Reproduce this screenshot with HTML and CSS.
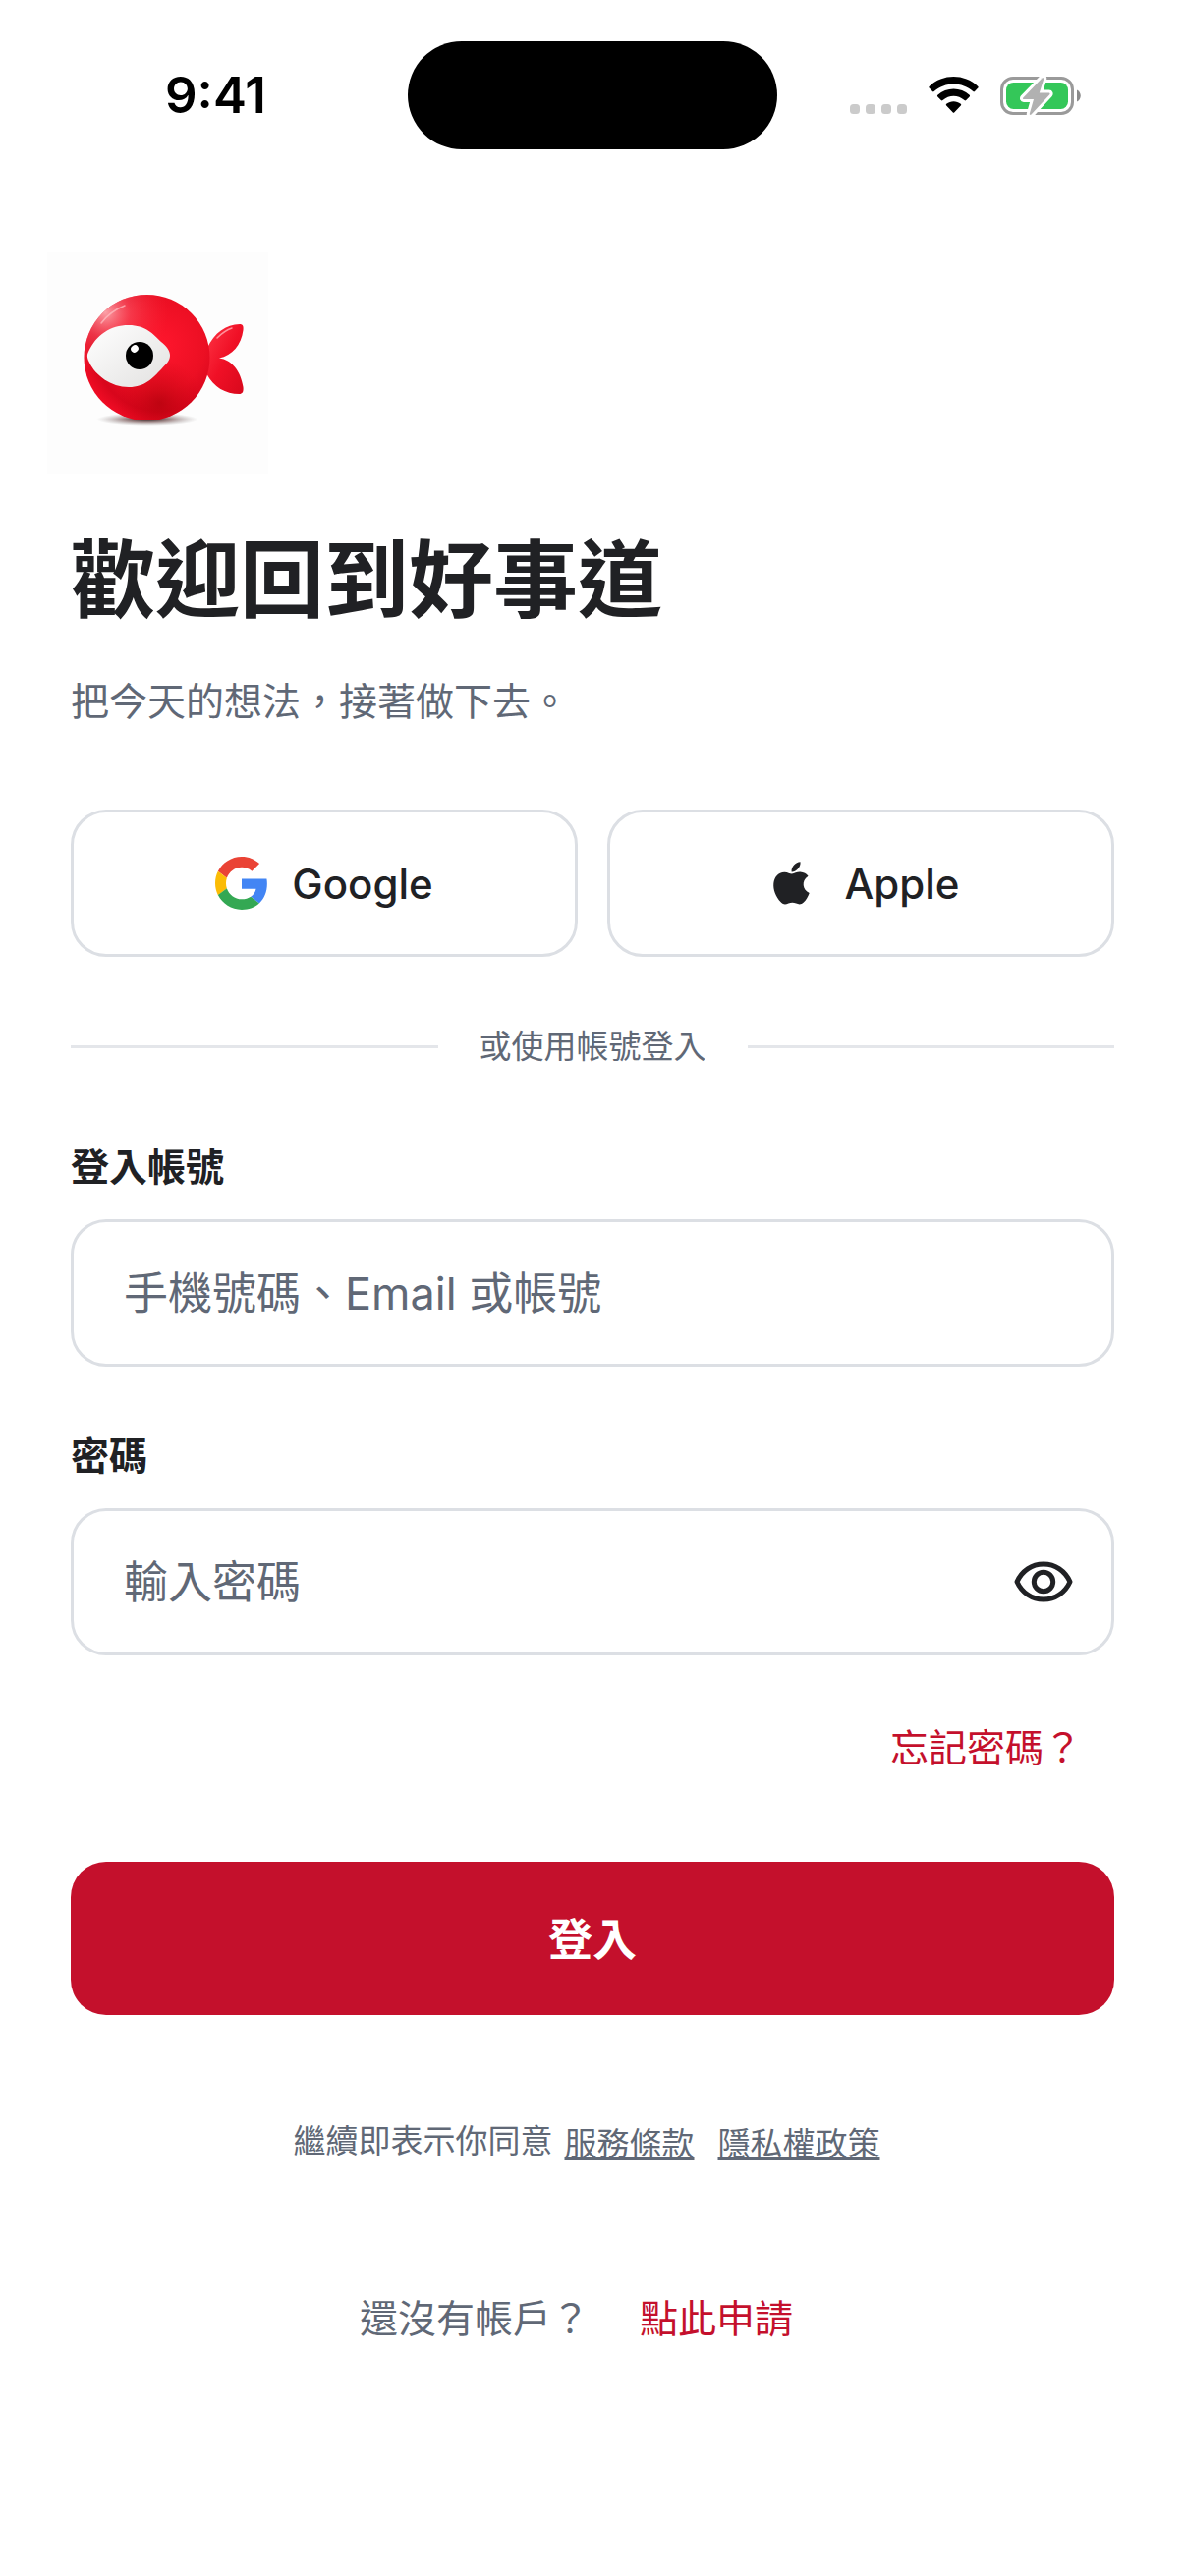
FILE: index.html
```html
<!DOCTYPE html>
<html lang="zh-Hant">
<head>
    <meta charset="UTF-8">
    <meta name="viewport" content="width=device-width, initial-scale=1.0">
    <title>登入</title>
    <link rel="stylesheet" href="styles.css">
</head>
<body>
    <header class="status-bar">
        <span class="time">9:41</span>
        <span class="island"></span>
        <div class="status-icons">
            <svg class="signal" viewBox="0 0 58 10" fill="#cbcbcb">
                <rect x="0" y="0" width="10" height="10" rx="3.5"/>
                <rect x="16" y="0" width="10" height="10" rx="3.5"/>
                <rect x="32" y="0" width="10" height="10" rx="3.5"/>
                <rect x="48" y="0" width="10" height="10" rx="3.5"/>
            </svg>
            <svg class="wifi" viewBox="0 0 51 38">
                <path d="M0.7 11.6a1.2 1.2 0 0 1 0-1.7C14.5-3.3 36.5-3.3 50.3 9.9a1.2 1.2 0 0 1 0 1.7L47 15a1.2 1.2 0 0 1-1.7 0C34 4.9 17 4.9 5.7 15a1.2 1.2 0 0 1-1.7 0z"/>
                <path d="M9.3 20.5a1.2 1.2 0 0 1 0-1.7c9-8.3 23.4-8.3 32.4 0a1.2 1.2 0 0 1 0 1.7l-3.5 3.6a1.2 1.2 0 0 1-1.7 0c-6.5-5.8-15.5-5.8-22 0a1.2 1.2 0 0 1-1.7 0z"/>
                <path d="M18.2 29.6a1.2 1.2 0 0 1 0-1.8c4.3-3.5 10.3-3.5 14.6 0a1.2 1.2 0 0 1 0 1.8l-6.4 6.7a1.2 1.2 0 0 1-1.8 0z"/>
            </svg>
            <svg class="battery" viewBox="0 0 82 41">
                <rect x="1.5" y="2.5" width="72" height="36" rx="11.5" fill="none" stroke="#9a9a9a" stroke-width="3"/>
                <rect x="6" y="7" width="63" height="27" rx="7.5" fill="#34c759"/>
                <path d="M78 14.5c5 2 5 10 0 12z" fill="#8a8a8a"/>
                <path d="M42.5 2.5 23.3 22.4c-.6.8-.3 1.6.6 1.6H34l-4.2 14.8c-.2 1 1 1.6 1.7.8l18.8-20.400c.6-.8.3-1.6-.6-1.6H39.8l4.400-14.2c.3-1.1-.9-1.7-1.7-.9z" fill="#b1b1b1" stroke="#fff" stroke-width="6" stroke-linejoin="round" paint-order="stroke"/>
            </svg>
        </div>
    </header>

    <main class="login">
        <svg class="logo" viewBox="0 0 225 225" role="img" aria-label="好事道">
            <defs>
                <radialGradient id="body" cx="0.6" cy="0.4" r="0.66">
                    <stop offset="0" stop-color="#ff162d"/>
                    <stop offset="0.55" stop-color="#ec0f23"/>
                    <stop offset="0.8" stop-color="#d8061c"/>
                    <stop offset="1" stop-color="#f50d26"/>
                </radialGradient>
                <radialGradient id="dark" cx="0.6" cy="0.86" r="0.35">
                    <stop offset="0" stop-color="#a80008" stop-opacity="0.6"/>
                    <stop offset="1" stop-color="#c80010" stop-opacity="0"/>
                </radialGradient>
                <radialGradient id="shine" cx="0.17" cy="0.14" r="0.5">
                    <stop offset="0" stop-color="#ffb3b8" stop-opacity="0.9"/>
                    <stop offset="0.4" stop-color="#ff6070" stop-opacity="0.5"/>
                    <stop offset="1" stop-color="#ff3040" stop-opacity="0"/>
                </radialGradient>
                <radialGradient id="shadow">
                    <stop offset="0" stop-color="#100" stop-opacity="0.9"/>
                    <stop offset="0.5" stop-color="#300" stop-opacity="0.4"/>
                    <stop offset="1" stop-color="#666" stop-opacity="0"/>
                </radialGradient>
                <linearGradient id="fin" x1="0" y1="0" x2="1" y2="1">
                    <stop offset="0" stop-color="#ff3545"/>
                    <stop offset="0.5" stop-color="#f01026"/>
                    <stop offset="1" stop-color="#d8081c"/>
                </linearGradient>
                <linearGradient id="white" x1="0" y1="0" x2="1" y2="1">
                    <stop offset="0" stop-color="#fff"/>
                    <stop offset="1" stop-color="#e2e1e0"/>
                </linearGradient>
            </defs>
            <rect width="225" height="225" fill="#fdfdfd"/>
            <ellipse cx="102" cy="170" rx="52" ry="7" fill="url(#shadow)"/>
            <path d="M163 97c7-15 19-24 33-24 3 0 4 2 3.500 6-2 15-11 26-24.500 28.500C188 109 197 121 199.500 137c.5 5-1 7-4 7-14 0-26-7-33-20z" fill="url(#fin)"/>
            <path d="M173 87c5-5 9-8 15-10" fill="none" stroke="#ff929b" stroke-width="1.5" stroke-linecap="round"/>
            <circle cx="101.5" cy="107" r="64" fill="url(#body)"/>
            <circle cx="101.5" cy="107" r="64" fill="url(#dark)"/>
            <circle cx="101.5" cy="107" r="64" fill="url(#shine)"/>
            <path d="M55 72c6-8 14-14 24-18" fill="none" stroke="#ffc0c4" stroke-width="1.5" stroke-linecap="round" opacity="0.7"/>
            <path d="M42 101C50 84 64 74 83 74c17 0 25 9 33 17 6 5 9 9 9 14 0 6-5 9-9 14-8 8-16 18-33 18-18 0-34-12-40-25-2-4-3-7-1-11z" fill="url(#white)"/>
            <circle cx="94" cy="105" r="14" fill="#000"/>
            <ellipse cx="89" cy="98" rx="4" ry="3.5" fill="#fff" transform="rotate(-40 89 98)"/>
        </svg>

        <h1>歡迎回到好事道</h1>
        <p class="subtitle">把今天的想法，接著做下去。</p>

        <div class="social">
            <button type="button" class="social-button">
                <svg class="google-icon" viewBox="0 0 48 48">
                    <path fill="#EA4335" d="M24 9.5c3.54 0 6.71 1.22 9.21 3.6l6.85-6.85C35.9 2.38 30.47 0 24 0 14.62 0 6.51 5.38 2.56 13.22l7.98 6.19C12.43 13.72 17.74 9.5 24 9.5z"/>
                    <path fill="#4285F4" d="M46.98 24.55c0-1.57-.15-3.09-.38-4.55H24v9.02h12.94c-.58 2.96-2.26 5.48-4.78 7.18l7.73 6c4.51-4.18 7.09-10.36 7.09-17.65z"/>
                    <path fill="#FBBC05" d="M10.53 28.59c-.48-1.45-.76-2.99-.76-4.59s.27-3.14.76-4.59l-7.98-6.19C.92 16.46 0 20.12 0 24c0 3.88.92 7.54 2.56 10.78l7.97-6.19z"/>
                    <path fill="#34A853" d="M24 48c6.48 0 11.93-2.13 15.89-5.81l-7.73-6c-2.15 1.45-4.92 2.3-8.16 2.3-6.26 0-11.57-4.22-13.47-9.91l-7.98 6.19C6.51 42.62 14.62 48 24 48z"/>
                </svg>
                Google
            </button>
            <button type="button" class="social-button">
                <svg class="apple-icon" viewBox="0 0 60 60">
                    <path transform="translate(0.7 1.1) scale(2.4)" fill="#202124" d="M17.05 20.28c-.98.95-2.05.8-3.08.35-1.09-.46-2.09-.48-3.24 0-1.44.62-2.2.44-3.06-.35C2.79 15.25 3.51 7.59 9.05 7.31c1.35.07 2.29.74 3.08.8 1.18-.24 2.31-.93 3.57-.84 1.51.12 2.65.72 3.4 1.8-3.12 1.87-2.38 5.98.48 7.13-.57 1.5-1.31 2.99-2.54 4.09zM12.03 7.25c-.15-2.23 1.66-4.07 3.74-4.25.29 2.58-2.34 4.5-3.74 4.25z"/>
                </svg>
                Apple
            </button>
        </div>

        <div class="divider">或使用帳號登入</div>

        <form action="#" method="post">
            <div class="field">
                <label for="account">登入帳號</label>
                <div class="input-box">
                    <input type="text" id="account" name="account" placeholder="手機號碼、Email 或帳號">
                </div>
            </div>
            <div class="field">
                <label for="password">密碼</label>
                <div class="input-box">
                    <input type="password" id="password" name="password" placeholder="輸入密碼">
                    <button type="button" class="toggle" aria-label="顯示密碼">
                        <svg viewBox="0 0 60 42" fill="none" stroke="#202124" stroke-width="5">
                            <path d="M3 21C8 10 18 3 30 3s22 7 27 18c-5 11-15 18-27 18S8 32 3 21z" stroke-linejoin="round"/>
                            <circle cx="30" cy="21" r="9.7"/>
                        </svg>
                    </button>
                </div>
            </div>
            <a href="#" class="forgot">忘記密碼？</a>
            <button type="submit" class="submit">登入</button>
        </form>

        <p class="terms">
            <span>繼續即表示你同意</span>
            <a href="#">服務條款</a>
            <a href="#">隱私權政策</a>
        </p>

        <p class="signup">
            <span>還沒有帳戶？</span>
            <a href="#">點此申請</a>
        </p>
    </main>
</body>
</html>
```
FILE: styles.css
```css
* {
    box-sizing: border-box;
}
body {
    margin: 0;
    background-color: #fff;
    color: #202124;
    font-family: Inter, "Noto Sans CJK TC", sans-serif;
}
h1, p {
    margin: 0;
}
a {
    color: #c4102c;
    text-decoration: none;
}
button, input {
    font-family: inherit;
    color: inherit;
}

/* Status bar */
.status-bar {
    display: grid;
    grid-template-columns: 1fr 376px 1fr;
    align-items: center;
    padding-top: 42px;
    margin-bottom: 105px;
}
.time {
    padding-left: 168px;
    color: #000;
    font-size: 51px;
    font-weight: 600;
    line-height: 60px;
}
.island {
    height: 110px;
    border-radius: 55px;
    background-color: #000;
}
.status-icons {
    display: flex;
    justify-content: flex-end;
    align-items: center;
    gap: 22px;
    padding-right: 106px;
}
.signal {
    width: 58px;
    height: 10px;
    margin-top: 28px;
}
.wifi {
    width: 51px;
    height: 38px;
}
.battery {
    width: 82px;
    height: 41px;
}

/* Login */
.login {
    display: flex;
    flex-direction: column;
    padding: 0 72px 72px;
}
.logo {
    width: 225px;
    height: 225px;
    margin-left: -24px;
}
h1 {
    margin-top: 52px;
    font-size: 86px;
    font-weight: 700;
    line-height: 114px;
}
.subtitle {
    margin-top: 36px;
    color: #606876;
    font-size: 39px;
    line-height: 60px;
}
.social {
    display: flex;
    gap: 30px;
    margin-top: 80px;
}
.social-button {
    flex: 1;
    display: flex;
    justify-content: center;
    align-items: center;
    gap: 24px;
    height: 150px;
    border: 3px solid #dcdfe4;
    border-radius: 36px;
    background-color: #fff;
    font-size: 42px;
    font-weight: 500;
}
.google-icon {
    width: 54px;
    height: 54px;
}
.apple-icon {
    width: 60px;
    height: 60px;
}
.divider {
    display: flex;
    align-items: center;
    gap: 42px;
    margin: 67px 0 72px;
    color: #606876;
    font-size: 33px;
    line-height: 48px;
}
.divider::before,
.divider::after {
    content: "";
    flex: 1;
    height: 3px;
    background-color: #e4e6ea;
}
form {
    display: flex;
    flex-direction: column;
}
.field {
    margin-bottom: 64px;
}
label {
    display: block;
    margin-bottom: 26px;
    font-size: 39px;
    font-weight: 700;
    line-height: 54px;
}
.input-box {
    display: flex;
    align-items: center;
    height: 150px;
    padding: 0 39px 0 51px;
    border: 3px solid #dcdfe4;
    border-radius: 36px;
}
.input-box input {
    flex: 1;
    min-width: 0;
    height: 100%;
    padding: 0;
    border: none;
    outline: none;
    background: none;
    font-size: 45px;
}
.input-box input::placeholder {
    color: #606876;
    opacity: 1;
}
.toggle {
    display: flex;
    padding: 0;
    border: none;
    background: none;
}
.toggle svg {
    width: 60px;
    height: 42px;
}
.forgot {
    align-self: flex-end;
    padding: 0 33px;
    font-size: 39px;
    line-height: 60px;
}
.submit {
    height: 156px;
    margin-top: 86px;
    padding: 0 0 3px;
    border: none;
    border-radius: 36px;
    background-color: #c4102c;
    color: #fff;
    font-size: 45px;
    font-weight: 700;
}
.terms {
    display: flex;
    justify-content: center;
    margin-top: 107px;
    color: #606876;
    font-size: 33px;
    line-height: 42px;
}
.terms a {
    padding: 3px 12px 0;
    color: inherit;
    text-decoration: underline;
}
.signup {
    display: flex;
    justify-content: center;
    gap: 18px;
    margin-top: 130px;
    color: #606876;
    font-size: 39px;
    line-height: 54px;
}
.signup a {
    padding: 0 33px;
}
```
